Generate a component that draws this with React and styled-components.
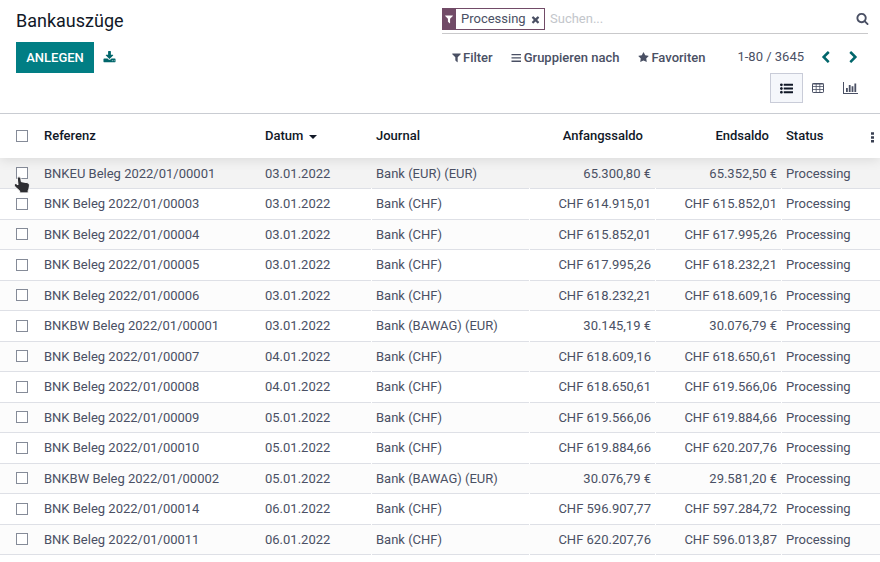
import React from "react";
import styled, { createGlobalStyle, css } from "styled-components";

const GlobalStyle = createGlobalStyle`
  * { box-sizing: border-box; }
  body { margin: 0; background: #fff; }
`;

const Page = styled.div`
  position: relative;
  width: 880px;
  height: 562px;
  overflow: hidden;
  background: #fff;
  color: #4a5064;
  font: 400 13px/20px Roboto, sans-serif;
`;

const ControlPanel = styled.header`
  height: 114px;
  display: grid;
  grid-template-columns: 426px 426px;
  grid-template-rows: 38px 38px 38px;
  padding-left: 16px;
  border-bottom: 1px solid #c9ccd2;
`;

const Title = styled.h1`
  margin: 0;
  padding-top: 9px;
  font-size: 18px;
  line-height: 24px;
  font-weight: 400;
  color: #111827;
`;

const SearchBar = styled.div`
  height: 34px;
  padding-top: 8px;
  display: flex;
  align-items: center;
  border-bottom: 1px solid #c9c9cb;
`;

const Facet = styled.div`
  width: 103px;
  height: 22px;
  margin: 0 5px 3px 0;
  display: flex;
  align-items: center;
  border: 1px solid #714b67;
`;

const FacetIcon = styled.span`
  width: 13px;
  height: 20px;
  padding-right: 1px;
  display: grid;
  place-items: center;
  background: #714b67;
  color: #fff;
`;

const FacetLabel = styled.span`
  padding: 0 0 1px 5px;
  flex: 1;
`;

const FacetClose = styled.span`
  width: 14px;
  display: flex;
`;

const Placeholder = styled.span`
  flex: 1;
  margin-bottom: 4px;
  color: #c3c6cb;
`;

const SearchIcon = styled.span`
  display: flex;
  margin: 0 -1px 4px 0;
`;

const Actions = styled.div`
  display: flex;
  align-items: center;
  gap: 9px;
  padding-top: 1px;
`;

const CreateButton = styled.button`
  width: 78px;
  height: 31px;
  padding: 0;
  border: 0;
  background: #017e84;
  color: #fff;
  font: 500 13px/20px Roboto, sans-serif;
`;

const ExportIcon = styled.span`
  display: flex;
  padding-bottom: 1px;
  color: #01666b;
`;

const Tools = styled.div`
  display: flex;
  align-items: center;
  padding-left: 9px;
`;

const ToolButton = styled.span`
  display: flex;
  align-items: center;
  gap: ${(p) => p.$gap ?? 2}px;
  margin-right: 18px;
  padding: 1px 0 0 ${(p) => p.$inset ?? 0}px;
  font-weight: 500;
  white-space: nowrap;
`;

const Pager = styled.div`
  display: flex;
  align-items: center;
  margin-left: 14px;
  padding-right: 8px;
  flex: 1;
  justify-content: space-between;
  white-space: nowrap;
`;

const PagerArrows = styled.span`
  display: flex;
  gap: 15px;
  color: #01666b;
`;

const Views = styled.div`
  grid-column: 2;
  margin-top: -3px;
  margin-right: 2px;
  display: flex;
  justify-content: flex-end;
`;

const ViewButton = styled.span`
  width: 32px;
  height: 30px;
  display: grid;
  place-items: center;
  ${(p) =>
    p.$active &&
    css`
      width: 33px;
      margin-right: -1px;
      border: 1px solid #c9ccd8;
      background: #f5f7fb;
      color: #111827;
    `}
`;

const rowColumns = css`
  display: grid;
  grid-template-columns: 35px 221px 116px 158px 126px 126px 98px;
`;

const HeaderRow = styled.div`
  ${rowColumns}
  position: relative;
  height: 44px;
  align-items: center;
  background: #fff;
  color: #111827;
  font-weight: 500;
  box-shadow: 0 1px 12px rgba(0, 0, 0, 0.12);
  clip-path: inset(0 0 -12px 0);
  z-index: 1;
`;

const HeaderCell = styled.div`
  display: flex;
  align-items: center;
  justify-content: ${(p) => (p.$numeric ? "flex-end" : "flex-start")};
  padding: 0 ${(p) => p.$right ?? (p.$numeric ? 13 : 5)}px 0 ${(p) => p.$left ?? 9}px;
`;

const SortCaret = styled.span`
  margin: 1px 0 0 6px;
  border: 4px solid transparent;
  border-top: 4px solid #111827;
  border-bottom: 0;
`;

const Spacer = styled.span`
  flex: 1;
`;

const Kebab = styled.span`
  display: flex;
  padding-top: 3px;
  color: #3a4052;
`;

const Row = styled.div`
  ${rowColumns}
  height: 30.5px;
  background: ${(p) => (p.$hover ? "#f3f3f3" : p.$odd ? "#fcfcfc" : "#fff")};
  ${(p) =>
    p.$hover &&
    css`
      height: 31px;
      padding-top: 0.5px;
    `}
`;

const Cell = styled.div`
  position: relative;
  display: flex;
  align-items: center;
  justify-content: ${(p) => (p.$numeric ? "flex-end" : "flex-start")};
  padding: 0.6px 5px 0 ${(p) => p.$left ?? 9}px;
  border-bottom: 1px solid #dee0e6;
  white-space: nowrap;
  ${(p) =>
    p.$gap &&
    css`
      &::after {
        content: "";
        position: absolute;
        right: 0;
        bottom: -1px;
        width: 1px;
        height: 1px;
        background: #fff;
      }
    `}
`;

const CheckCell = styled(Cell)`
  padding: 0;
`;

const Checkbox = styled.span`
  width: 12px;
  height: 12px;
  margin-left: 16px;
  border: 1px solid #858b98;
  background: #fff;
`;

const Pointer = styled.span`
  position: absolute;
  left: 13px;
  top: 176px;
  display: flex;
  z-index: 2;
`;

const paths = {
  filter:
    "M1595 295q17 41-14 70l-493 493v742q0 42-39 59-13 5-25 5-27 0-45-19l-256-256q-19-19-19-45v-486l-493-493q-31-29-14-70 17-39 59-39h1280q42 0 59 39z",
  list:
    "M384 1408q0 80-56 136t-136 56-136-56-56-136 56-136 136-56 136 56 56 136zm0-512q0 80-56 136t-136 56-136-56-56-136 56-136 136-56 136 56 56 136zm1408 416v192q0 13-9.5 22.5t-22.5 9.5h-1216q-13 0-22.5-9.5t-9.5-22.5v-192q0-13 9.5-22.5t22.5-9.5h1216q13 0 22.5 9.5t9.5 22.5zm-1408-928q0 80-56 136t-136 56-136-56-56-136 56-136 136-56 136 56 56 136zm1408 416v192q0 13-9.5 22.5t-22.5 9.5h-1216q-13 0-22.5-9.5t-9.5-22.5v-192q0-13 9.5-22.5t22.5-9.5h1216q13 0 22.5 9.5t9.5 22.5zm0-512v192q0 13-9.5 22.5t-22.5 9.5h-1216q-13 0-22.5-9.5t-9.5-22.5v-192q0-13 9.5-22.5t22.5-9.5h1216q13 0 22.5 9.5t9.5 22.5z",
  search:
    "M1216 832q0-185-131.5-316.5t-316.5-131.5-316.5 131.5-131.5 316.5 131.5 316.5 316.5 131.5 316.5-131.5 131.5-316.5zm512 832q0 52-38 90t-90 38q-54 0-90-38l-343-342q-179 124-399 124-143 0-273.5-55.5t-225-150-150-225-55.5-273.5 55.5-273.5 150-225 225-150 273.5-55.5 273.5 55.5 225 150 150 225 55.5 273.5q0 220-124 399l343 343q37 37 37 90z",
  star:
    "M1728 647q0 22-26 48l-363 354 86 500q1 7 1 20 0 21-10.5 35.5t-30.5 14.5q-19 0-40-12l-449-236-449 236q-22 12-40 12-21 0-31.5-14.5t-10.5-35.5q0-6 2-20l86-500-364-354q-25-27-25-48 0-37 56-46l502-73 225-455q19-41 49-41t49 41l225 455 502 73q56 9 56 46z",
  close:
    "M1490 1322q0 40-28 68l-136 136q-28 28-68 28t-68-28l-294-294-294 294q-28 28-68 28t-68-28l-136-136q-28-28-28-68t28-68l294-294-294-294q-28-28-28-68t28-68l136-136q28-28 68-28t68 28l294 294 294-294q28-28 68-28t68 28l136 136q28 28 28 68t-28 68l-294 294 294 294q28 28 28 68z",
  left:
    "M1427 301l-531 531 531 531q19 19 19 45t-19 45l-166 166q-19 19-45 19t-45-19l-742-742q-19-19-19-45t19-45l742-742q19-19 45-19t45 19l166 166q19 19 19 45t-19 45z",
  right:
    "M1363 877l-742 742q-19 19-45 19t-45-19l-166-166q-19-19-19-45t19-45l531-531-531-531q-19-19-19-45t19-45l166-166q19-19 45-19t45 19l742 742q19 19 19 45t-19 45z",
  download:
    "M1344 1344q0-26-19-45t-45-19-45 19-19 45 19 45 45 19 45-19 19-45zm256 0q0-26-19-45t-45-19-45 19-19 45 19 45 45 19 45-19 19-45zm128-224v320q0 40-28 68t-68 28h-1472q-40 0-68-28t-28-68v-320q0-40 28-68t68-28h465l135 136q58 56 136 56t136-56l136-136h464q40 0 68 28t28 68zm-325-569q17 41-14 70l-448 448q-18 19-45 19t-45-19l-448-448q-31-29-14-70 17-39 59-39h256v-448q0-26 19-45t45-19h256q26 0 45 19t19 45v448h256q42 0 59 39z",
};

const Glyph = ({ name, size = 13, box = "0 0 1792 1792" }) => (
  <svg width={size} height={size} viewBox={box} fill="currentColor">
    <path d={paths[name]} />
  </svg>
);

const BarsIcon = () => (
  <svg width="11" height="13" viewBox="0 0 11 13" fill="currentColor">
    <path d="M.5 3h9.500v1.300H.5zM.5 6.300h9.500v1.300H.5zM.5 9.600h9.500v1.300H.5z" />
  </svg>
);

const TableIcon = () => (
  <svg width="12" height="10" viewBox="0 0 12 10" fill="none" stroke="currentColor">
    <rect x=".5" y=".5" width="11" height="9" rx=".7" />
    <path d="M.5 1h11" />
    <path d="M.5 3.500h11M.5 6.500h11M4.200 1v8.500M7.800 1v8.500" strokeWidth=".8" />
  </svg>
);

const ChartIcon = () => (
  <svg width="15" height="12" viewBox="0 0 15 12" fill="currentColor">
    <path d="M0 0h1v11h14v1H0zM3 6h1.800v4H3zM5.800 3h1.800v7H5.800zM8.600 4.200h1.800V10H8.600zM11.400 1.500h1.800V10h-1.800z" />
  </svg>
);

const KebabIcon = () => (
  <svg width="3" height="11" viewBox="0 0 3 11" fill="currentColor">
    <path d="M0 .3h3v2.500H0zM0 4.200h3v2.500H0zM0 8.100h3v2.500H0z" />
  </svg>
);

const HandIcon = () => (
  <svg width="18" height="19" viewBox="0 0 18 19">
    <path
      d="M4.300 2.200c0-1.900 3.200-1.900 3.500 0l.5 3.500 5.600.9c1.700.3 2.500 1.200 2.500 2.700 0 2.300-.6 3.900-1.200 5.300v2.300H6.700v-2L2 10.800C.4 8.800 1.900 7 3.500 7.900l1.500 1z"
      fill="#2e2e32"
      stroke="#fff"
      strokeWidth="1"
    />
  </svg>
);

const rows = [
  ["BNKEU Beleg 2022/01/00001", "03.01.2022", "Bank (EUR) (EUR)", "65.300,80 €", "65.352,50 €"],
  ["BNK Beleg 2022/01/00003", "03.01.2022", "Bank (CHF)", "CHF 614.915,01", "CHF 615.852,01"],
  ["BNK Beleg 2022/01/00004", "03.01.2022", "Bank (CHF)", "CHF 615.852,01", "CHF 617.995,26"],
  ["BNK Beleg 2022/01/00005", "03.01.2022", "Bank (CHF)", "CHF 617.995,26", "CHF 618.232,21"],
  ["BNK Beleg 2022/01/00006", "03.01.2022", "Bank (CHF)", "CHF 618.232,21", "CHF 618.609,16"],
  ["BNKBW Beleg 2022/01/00001", "03.01.2022", "Bank (BAWAG) (EUR)", "30.145,19 €", "30.076,79 €"],
  ["BNK Beleg 2022/01/00007", "04.01.2022", "Bank (CHF)", "CHF 618.609,16", "CHF 618.650,61"],
  ["BNK Beleg 2022/01/00008", "04.01.2022", "Bank (CHF)", "CHF 618.650,61", "CHF 619.566,06"],
  ["BNK Beleg 2022/01/00009", "05.01.2022", "Bank (CHF)", "CHF 619.566,06", "CHF 619.884,66"],
  ["BNK Beleg 2022/01/00010", "05.01.2022", "Bank (CHF)", "CHF 619.884,66", "CHF 620.207,76"],
  ["BNKBW Beleg 2022/01/00002", "05.01.2022", "Bank (BAWAG) (EUR)", "30.076,79 €", "29.581,20 €"],
  ["BNK Beleg 2022/01/00014", "06.01.2022", "Bank (CHF)", "CHF 596.907,77", "CHF 597.284,72"],
  ["BNK Beleg 2022/01/00011", "06.01.2022", "Bank (CHF)", "CHF 620.207,76", "CHF 596.013,87"],
];

export default function App() {
  return (
    <Page>
      <GlobalStyle />
      <ControlPanel>
        <Title>Bankauszüge</Title>
        <SearchBar>
          <Facet>
            <FacetIcon><Glyph name="filter" size={10} /></FacetIcon>
            <FacetLabel>Processing</FacetLabel>
            <FacetClose><Glyph name="close" size={11} /></FacetClose>
          </Facet>
          <Placeholder>Suchen...</Placeholder>
          <SearchIcon><Glyph name="search" size={13} /></SearchIcon>
        </SearchBar>
        <Actions>
          <CreateButton>ANLEGEN</CreateButton>
          <ExportIcon><Glyph name="download" size={13} /></ExportIcon>
        </Actions>
        <Tools>
          <ToolButton $gap={1}><Glyph name="filter" size={11} />Filter</ToolButton>
          <ToolButton><BarsIcon />Gruppieren nach</ToolButton>
          <ToolButton $gap={2} $inset={1}><Glyph name="star" size={11} />Favoriten</ToolButton>
          <Pager>
            <span>1-80 / 3645</span>
            <PagerArrows>
              <Glyph name="left" size={13} />
              <Glyph name="right" size={13} />
            </PagerArrows>
          </Pager>
        </Tools>
        <Views>
          <ViewButton $active><Glyph name="list" size={13} /></ViewButton>
          <ViewButton><TableIcon /></ViewButton>
          <ViewButton><ChartIcon /></ViewButton>
        </Views>
      </ControlPanel>
      <HeaderRow>
        <Checkbox />
        <HeaderCell>Referenz</HeaderCell>
        <HeaderCell>Datum<SortCaret /></HeaderCell>
        <HeaderCell $left={4}>Journal</HeaderCell>
        <HeaderCell $numeric>Anfangssaldo</HeaderCell>
        <HeaderCell $numeric>Endsaldo</HeaderCell>
        <HeaderCell $left={4} $right={6}>Status<Spacer /><Kebab><KebabIcon /></Kebab></HeaderCell>
      </HeaderRow>
      {rows.map(([reference, date, journal, start, end], i) => (
        <Row key={reference} $hover={i === 0} $odd={i % 2 === 0}>
          <CheckCell><Checkbox /></CheckCell>
          <Cell>{reference}</Cell>
          <Cell $gap>{date}</Cell>
          <Cell $left={4} $gap>{journal}</Cell>
          <Cell $numeric $gap>{start}</Cell>
          <Cell $numeric $gap>{end}</Cell>
          <Cell $left={4}>Processing</Cell>
        </Row>
      ))}
      <Pointer><HandIcon /></Pointer>
    </Page>
  );
}
